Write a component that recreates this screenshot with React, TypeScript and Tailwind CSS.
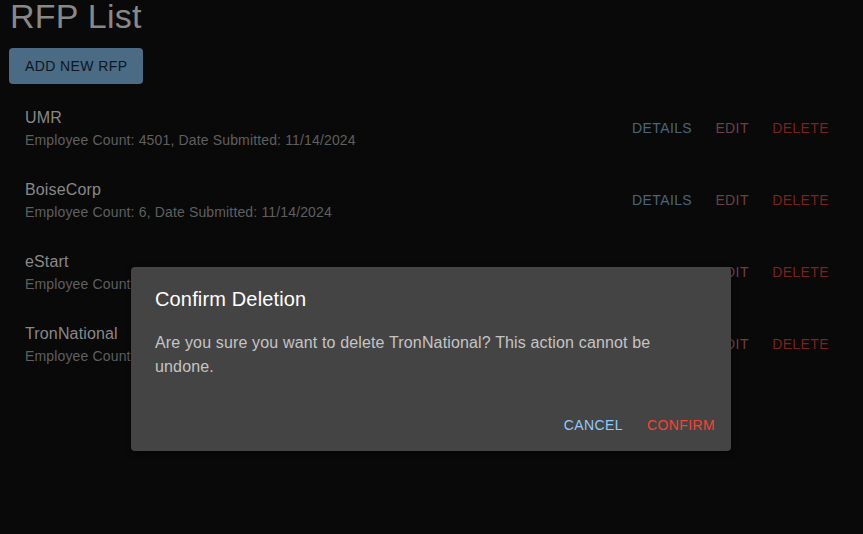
import React from "react";

const rows = [
  { name: "UMR", count: 4501, date: "11/14/2024" },
  { name: "BoiseCorp", count: 6, date: "11/14/2024" },
  { name: "eStart", count: 120, date: "11/14/2024" },
  { name: "TronNational", count: 350, date: "11/14/2024" },
];

export default function App() {
  return (
    <div
      className="relative h-[534px] w-full overflow-hidden bg-[#090909]"
      style={{ fontFamily: '"Liberation Sans", Arial, Helvetica, sans-serif' }}
    >
      <div className="pl-[10px] pr-[10px]">
        <h1 className="mt-[-5px] text-[34px] leading-[42px] font-normal tracking-[0.25px] text-[#888888]">RFP List</h1>
        <button className="ml-[-1px] mt-[11px] h-[36px] rounded-[4px] bg-[#4b6a84] px-[16px] text-[14px] font-medium uppercase tracking-[0.4px] text-[#0c1722]">
          Add New RFP
        </button>
        <ul className="py-[8px]">
          {rows.map((r) => (
            <li key={r.name} className="flex h-[72px] items-center justify-between px-[16px] py-[8px] pl-[15px]">
              <div className="flex flex-col">
                <span className="text-[16px] leading-[24px] tracking-[0.15px] text-[#888888]">{r.name}</span>
                <span className="text-[14px] leading-[20px] tracking-[0.15px] text-[#5f5f5f]">
                  Employee Count: {r.count}, Date Submitted: {r.date}
                </span>
              </div>
              <div className="flex items-center">
                <button className="h-[36px] min-w-[64px] px-[8px] text-[14px] font-medium uppercase tracking-[0.4px] text-[#48657c]">
                  Details
                </button>
                <button className="h-[36px] min-w-[64px] px-[8px] text-[14px] font-medium uppercase tracking-[0.4px] text-[#6d3f4a]">
                  Edit
                </button>
                <button className="h-[36px] min-w-[64px] px-[8px] text-[14px] font-medium uppercase tracking-[0.4px] text-[#7a221e]">
                  Delete
                </button>
              </div>
            </li>
          ))}
        </ul>
      </div>

      <div className="absolute left-[131px] top-[267px] flex w-[600px] flex-col rounded-[4px] bg-[#444444] shadow-[0px_2px_6px_rgba(0,0,0,0.4)]">
        <h2 className="px-[24px] py-[16px] text-[20px] leading-[32px] font-medium tracking-[0.15px] text-white">Confirm Deletion</h2>
        <p className="px-[24px] pb-[20px] text-[16px] leading-[24px] tracking-[0.15px] text-[#c4c4c4]">
          Are you sure you want to delete TronNational? This action cannot be undone.
        </p>
        <div className="flex items-center justify-end gap-[8px] p-[8px]">
          <button className="h-[36px] min-w-[64px] px-[8px] text-[14px] font-medium uppercase tracking-[0.4px] text-[#90caf9]">
            Cancel
          </button>
          <button className="h-[36px] min-w-[64px] px-[8px] text-[14px] font-medium uppercase tracking-[0.4px] text-[#f44336]">
            Confirm
          </button>
        </div>
      </div>
    </div>
  );
}
